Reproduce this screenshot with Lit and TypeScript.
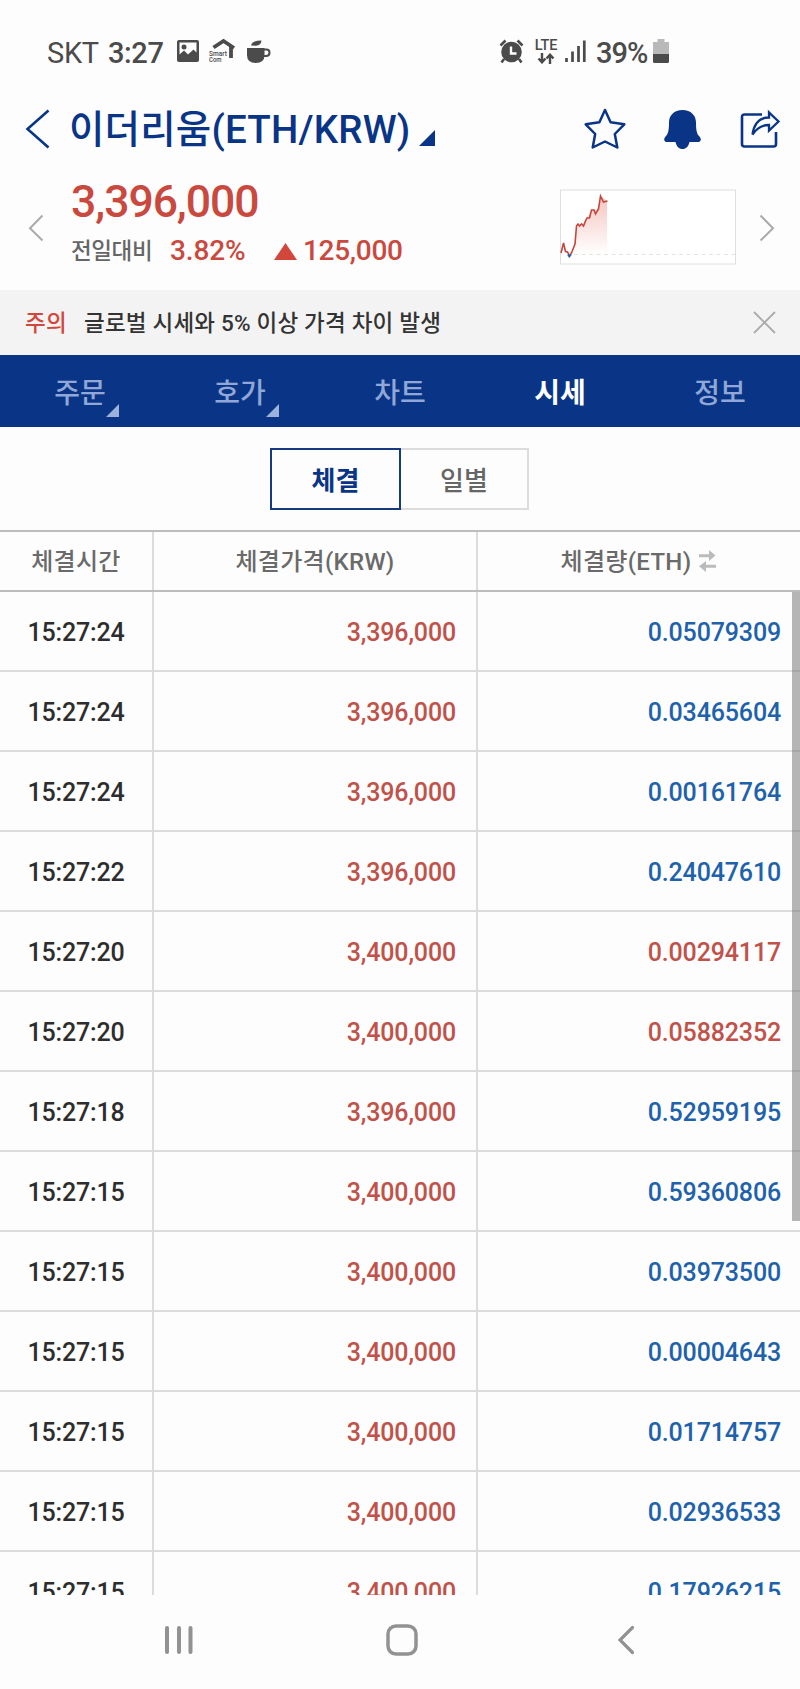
import { LitElement, html, css } from "lit";
import { customElement } from "lit/decorators.js";
import { classMap } from "lit/directives/class-map.js";

type Side = "buy" | "sell";
interface Trade { time: string; price: string; qty: string; side: Side; }

const TRADES: Trade[] = [
  { time: "15:27:24", price: "3,396,000", qty: "0.05079309", side: "sell" },
  { time: "15:27:24", price: "3,396,000", qty: "0.03465604", side: "sell" },
  { time: "15:27:24", price: "3,396,000", qty: "0.00161764", side: "sell" },
  { time: "15:27:22", price: "3,396,000", qty: "0.24047610", side: "sell" },
  { time: "15:27:20", price: "3,400,000", qty: "0.00294117", side: "buy" },
  { time: "15:27:20", price: "3,400,000", qty: "0.05882352", side: "buy" },
  { time: "15:27:18", price: "3,396,000", qty: "0.52959195", side: "sell" },
  { time: "15:27:15", price: "3,400,000", qty: "0.59360806", side: "sell" },
  { time: "15:27:15", price: "3,400,000", qty: "0.03973500", side: "sell" },
  { time: "15:27:15", price: "3,400,000", qty: "0.00004643", side: "sell" },
  { time: "15:27:15", price: "3,400,000", qty: "0.01714757", side: "sell" },
  { time: "15:27:15", price: "3,400,000", qty: "0.02936533", side: "sell" },
  { time: "15:27:15", price: "3,400,000", qty: "0.17926215", side: "sell" },
];

const TABS = [
  { label: "주문", menu: true, active: false },
  { label: "호가", menu: true, active: false },
  { label: "차트", menu: false, active: false },
  { label: "시세", menu: false, active: true },
  { label: "정보", menu: false, active: false },
];

@customElement("status-bar")
class StatusBar extends LitElement {
  static styles = css`
    :host { display: flex; align-items: center; height: 102px; padding: 0 131px 0 47px; box-sizing: border-box; color: #4b4b4b; font-size: 29px; line-height: 34px; }
    svg { display: block; flex: none; }
    .carrier { width: 61px; letter-spacing: -0.3px; padding-top: 3px; }
    .clock { width: 68px; font-weight: 500; font-size: 29px; letter-spacing: -0.4px; padding-top: 3px; }
    .home { margin-left: 9px; }
    .cup { margin-left: 11px; }
    .alarm { margin-left: auto; }
    .lte { display: flex; flex-direction: column; align-items: center; width: 24px; height: 25px; margin-left: 10px; }
    .lte-text { font-size: 14.500px; line-height: 13px; height: 14px; font-weight: 500; letter-spacing: -0.2px; }
    .signal { margin-left: 7px; }
    .percent { width: 57px; margin-left: 10px; font-size: 29px; font-weight: 500; letter-spacing: -1px; white-space: nowrap; padding-top: 3px; }
  `;
  render() {
    return html`
      <span class="carrier">SKT</span><span class="clock">3:27</span>
      <svg width="24" height="24" viewBox="0 0 24 24"><path fill="#4b4b4b" fill-rule="evenodd" d="M3 1h18q2 0 2 2v18q0 2-2 2H3q-2 0-2-2V3q0-2 2-2zM3.500 3.500v12l4.500-4 4 4 5.500-5 3 3v-10z"/><circle cx="8" cy="8" r="2.500" fill="#4b4b4b"/></svg>
      <svg class="home" width="27" height="26" viewBox="0 0 27 26"><path d="M4.500 9.500L14.500 3 25 10M22 8v12" fill="none" stroke="#4b4b4b" stroke-width="3.800"/><text x="0" y="17.500" font-size="7.500" font-weight="500" fill="#4b4b4b" textLength="18" lengthAdjust="spacingAndGlyphs">Smart</text><text x="0" y="24" font-size="7.500" font-weight="500" fill="#4b4b4b" textLength="12.500" lengthAdjust="spacingAndGlyphs">Com</text></svg>
      <svg class="cup" width="24" height="25" viewBox="0 0 24 25"><path d="M0 9h17.500v7q0 8-8.800 8T0 16z" fill="#4b4b4b"/><path d="M17 10.500h2.500q3 0 3 3.200t-3.500 3.200h-2" fill="none" stroke="#4b4b4b" stroke-width="2"/><path d="M4 6.500Q5 1.500 14.500 1.500 14 6.500 9 6.800z" fill="#4b4b4b"/></svg>
      <svg class="alarm" width="25" height="26" viewBox="0 0 25 26"><circle cx="12.500" cy="14" r="10.300" fill="#4b4b4b"/><path d="M5 21L2.500 24.500M20 21l2.500 3.500M1.500 7.500l5-5M23.500 7.500l-5-5" stroke="#4b4b4b" stroke-width="2.600"/><path d="M12 8.500v7h5.500" fill="none" stroke="#fff" stroke-width="2.400"/></svg>
      <span class="lte"><span class="lte-text">LTE</span>
        <svg width="18" height="11" viewBox="0 0 18 11"><path d="M5 0v9M1.500 5.500L5 9.300l3.500-3.800M13 11V2M9.500 5.500L13 1.700l3.500 3.800" fill="none" stroke="#4b4b4b" stroke-width="2.400"/></svg></span>
      <svg class="signal" width="21" height="24" viewBox="0 0 21 24"><path d="M1.500 19v4M7.500 12.500V23M13.500 7v16M19.300 1.500V23" stroke="#4b4b4b" stroke-width="2.700"/></svg>
      <span class="percent">39%</span>
      <svg width="16" height="26" viewBox="0 0 16 26"><path d="M4.500 1h7v3H16v12H0V4h4.500z" fill="#b9b9b9"/><path d="M0 16h16v7.500q0 1.500-1.500 1.500h-13Q0 25 0 23.500z" fill="#4b4b4b"/></svg>
    `;
  }
}

@customElement("coin-header")
class CoinHeader extends LitElement {
  static styles = css`
    :host { display: flex; align-items: center; height: 54px; padding: 0 19px 0 25px; box-sizing: border-box; color: #0a3586; }
    svg { display: block; flex: none; }
    .title { margin-left: 18px; width: 350px; font-size: 38.500px; line-height: 50px; font-weight: 500; white-space: nowrap; letter-spacing: 0.2px; padding-top: 2px; }
    .drop { margin-top: 17px; }
    .star { margin-left: auto; }
    .bell { margin-left: 38px; }
    .share { margin-left: 39px; }
  `;
  render() {
    return html`
      <svg width="26" height="40" viewBox="0 0 26 40"><path d="M23.500 1.500L2.500 20l21 18.500" fill="none" stroke="#0a3586" stroke-width="2.600"/></svg>
      <span class="title">이더리움(ETH/KRW)</span>
      <svg class="drop" width="16" height="16"><path d="M16 0v16H0z" fill="#0a3586"/></svg>
      <svg class="star" width="42" height="42" viewBox="0 0 42 42"><path d="M21 2l5.600 12.200L40.300 16.300l-9.500 9.700L33.300 39.500 21 33.500 8.700 39.500 11.200 26 1.700 16.300l13.700-2.100z" fill="none" stroke="#0a3586" stroke-width="2.500" stroke-linejoin="round"/></svg>
      <svg class="bell" width="37" height="41" viewBox="0 0 37 41"><path d="M18.500 1C27 1 32 6.500 32 13.500c0 8 .8 11.500 3.500 14 2.500 2.800 1.200 5.500-2 5.500H25.500c-1 4.500-3.500 7-7 7s-6-2.500-7-7H3.500c-3.200 0-4.500-2.700-2-5.500C4.200 25 5 21.500 5 13.500 5 6.500 10 1 18.500 1z" fill="#0a3586"/></svg>
      <svg class="share" width="41" height="40" viewBox="0 0 41 40"><g fill="none" stroke="#0a3586" stroke-width="2.600"><path d="M22 5.500H4.500Q2 5.500 2 8v27q0 2.500 2.500 2.500h29q2.500 0 2.500-2.500V23"/><path d="M12.500 25.500C14 14.500 20 8.500 29 8.500V3.500l9.500 9-9.500 9V16C22 16 17 19 12.500 25.500z" stroke-width="2.300"/></g></svg>
    `;
  }
}

@customElement("price-panel")
class PricePanel extends LitElement {
  static styles = css`
    :host { display: flex; height: 134px; padding: 0 25px 0 28px; box-sizing: border-box; color: #c9493f; }
    svg { display: block; flex: none; }
    .side { margin-top: 58px; }
    .info { margin-left: 27px; padding-top: 21px; flex: 1; }
    .price { font-size: 44.500px; line-height: 50px; font-weight: 500; letter-spacing: -1.050px; }
    .change { display: flex; align-items: center; height: 48px; white-space: nowrap; font-size: 28px; line-height: 34px; font-weight: 500; }
    .label { color: #666; font-size: 22.500px; font-weight: 500; width: 99px; letter-spacing: -0.4px; }
    .rate { width: 104px; letter-spacing: -0.1px; }
    .amount { margin-left: 6px; letter-spacing: -0.3px; }
    .chart { margin-top: 33px; margin-right: 22px; }
  `;
  render() {
    return html`
      <svg class="side" width="16" height="28" viewBox="0 0 16 28"><path d="M14.500 1.500L2 14.300l12.500 12.200" fill="none" stroke="#aaa" stroke-width="2"/></svg>
      <div class="info">
        <div class="price">3,396,000</div>
        <div class="change"><span class="label">전일대비</span><span class="rate">3.82%</span>
          <svg width="23" height="17"><path d="M11.500 0L23 17H0z" fill="#d2473c"/></svg><span class="amount">125,000</span></div>
      </div>
      <svg class="chart" width="177" height="76" viewBox="0 0 177 76">
        <defs><linearGradient id="area" x1="0" y1="0" x2="0" y2="1"><stop offset="0" stop-color="#f4c4bf"/><stop offset="1" stop-color="#fff"/></linearGradient></defs>
        <rect x="0.500" y="1" width="175" height="74" fill="#fff" stroke="#dedede"/>
        <path d="M11 65L15 52 16.500 35 22 36 27 28 33 20 37 21 41 7 47 12V65z" fill="url(#area)"/>
        <path d="M14 65.500H175" stroke="#e2e2e2" stroke-dasharray="4 3.500"/>
        <path d="M1 64L3.500 54l2 8.500 2 .5 2 4 2-3L15 55l1.500-18 1.500-2 1.500 2 2-2 2 2 2-5 1.500-3h2.500l2-8h2.500l1.500 4 3-5L40.500 7l3 6 4-1" fill="none" stroke="#c4473f" stroke-width="1.600"/>
        <path d="M8 65.500l1.300 2 1.700-2" fill="none" stroke="#2165ae" stroke-width="1.800"/>
      </svg>
      <svg class="side" width="16" height="28" viewBox="0 0 16 28"><path d="M1.500 1.500L14 14.300 1.500 26.500" fill="none" stroke="#aaa" stroke-width="2"/></svg>
    `;
  }
}

@customElement("trade-table")
class TradeTable extends LitElement {
  static styles = css`
    :host { display: block; }
    .row, .head { display: grid; grid-template-columns: 154px 324px 322px; box-sizing: border-box; }
    .row { height: 80px; border-bottom: 2px solid #dcdcdc; font-size: 25px; font-weight: 500; letter-spacing: -0.150px; }
    .head { height: 62px; border-top: 2px solid #bdbdbd; border-bottom: 2px solid #bdbdbd; color: #6a6a6a; font-size: 24px; font-weight: 500; letter-spacing: 0.3px; }
    .cell { display: flex; align-items: center; justify-content: flex-end; box-sizing: border-box; border-right: 2px solid #dcdcdc; padding: 2px 20px 0 0; }
    .cell:last-child { border-right: 0; padding-right: 19px; }
    .head .cell, .head .cell:last-child { justify-content: center; padding: 0 0 3px; }
    .row .time { justify-content: center; padding-right: 0; }
    .time { color: #2d2d2d; }
    .buy { color: #c0524a; }
    .sell { color: #1f62ac; }
    .swap { margin: 2px 0 0 7px; }
    .body { position: relative; height: 1003px; overflow: hidden; }
    .thumb { position: absolute; right: 0; top: 0; width: 8px; height: 629px; background: rgba(115, 115, 115, 0.52); }
  `;
  render() {
    return html`
      <div class="head">
        <div class="cell">체결시간</div><div class="cell">체결가격(KRW)</div>
        <div class="cell">체결량(ETH)<svg class="swap" width="19" height="24" viewBox="0 0 19 24"><path d="M1 5.200h10V1L17.500 6.600 11 12V8.200H1zM18 18.700H8V23l-7-5.700L8 12v3.700h10z" fill="#bbb"/></svg></div>
      </div>
      <div class="body">
        ${TRADES.map((t) => html`<div class="row">
          <div class="cell time">${t.time}</div>
          <div class="cell buy">${t.price}</div>
          <div class=${classMap({ cell: true, [t.side]: true })}>${t.qty}</div>
        </div>`)}
        <div class="thumb"></div>
      </div>
    `;
  }
}

@customElement("app-root")
class AppRoot extends LitElement {
  static styles = css`
    :host { display: flex; flex-direction: column; width: 800px; height: 1689px; overflow: hidden; background: #fdfdfd; font-family: Roboto, "Noto Sans CJK KR", sans-serif; }
    .notice { display: flex; align-items: center; height: 65px; padding: 0 24px 0 25px; background: #f3f3f3; color: #333; font-size: 22.500px; font-weight: 500; white-space: nowrap; box-sizing: border-box; }
    .notice span { padding-bottom: 4px; letter-spacing: 0.2px; }
    .warn { width: 59px; color: #d2473c; }
    .close { margin-left: auto; }
    .tabs { display: grid; grid-template-columns: repeat(5, 1fr); height: 71.500px; background: #0a3586; }
    .tab { position: relative; display: flex; align-items: center; justify-content: center; color: #90a7d7; font-size: 28px; font-weight: 500; }
    .active { color: #fff; font-weight: 700; }
    .corner { position: absolute; left: 106px; top: 49px; }
    .toggle { display: flex; justify-content: center; height: 103.500px; padding: 21.500px 1px 0 0; box-sizing: border-box; }
    .option { width: 128px; height: 62px; box-sizing: border-box; border: 2px solid #dcdcdc; border-left: 0; display: flex; align-items: center; justify-content: center; font-size: 26px; font-weight: 500; color: #666; padding-bottom: 2px; }
    .chosen { width: 131px; border: 2px solid #153a7d; color: #0a3586; font-weight: 700; }
    .nav { display: flex; align-items: center; justify-content: space-between; flex: 1; padding: 0 165px 4px 164px; }
    .home { margin-right: 8px; }
  `;
  render() {
    return html`
      <status-bar></status-bar>
      <coin-header></coin-header>
      <price-panel></price-panel>
      <div class="notice"><span class="warn">주의</span><span>글로벌 시세와 5% 이상 가격 차이 발생</span>
        <svg class="close" width="23" height="23"><path d="M1 1l21 21M22 1L1 22" stroke="#aaa" stroke-width="1.800"/></svg></div>
      <div class="tabs">
        ${TABS.map((t) => html`<div class=${classMap({ tab: true, active: t.active })}>${t.label}${t.menu
          ? html`<svg class="corner" width="13" height="13"><path d="M13 0v13H0z" fill="#9bb2dc"/></svg>` : ""}</div>`)}
      </div>
      <div class="toggle"><div class="option chosen">체결</div><div class="option">일별</div></div>
      <trade-table></trade-table>
      <div class="nav">
        <svg width="30" height="30"><path d="M3 3v24M15 3v24M26.500 3v24" stroke="#929292" stroke-width="4" stroke-linecap="round"/></svg>
        <svg class="home" width="32" height="32"><rect x="2" y="2" width="28" height="28" rx="8" fill="none" stroke="#929292" stroke-width="3.500"/></svg>
        <svg width="18" height="30"><path d="M15.500 2.500L3 15l12.500 12.500" fill="none" stroke="#929292" stroke-width="3.200" stroke-linecap="round"/></svg>
      </div>
    `;
  }
}
